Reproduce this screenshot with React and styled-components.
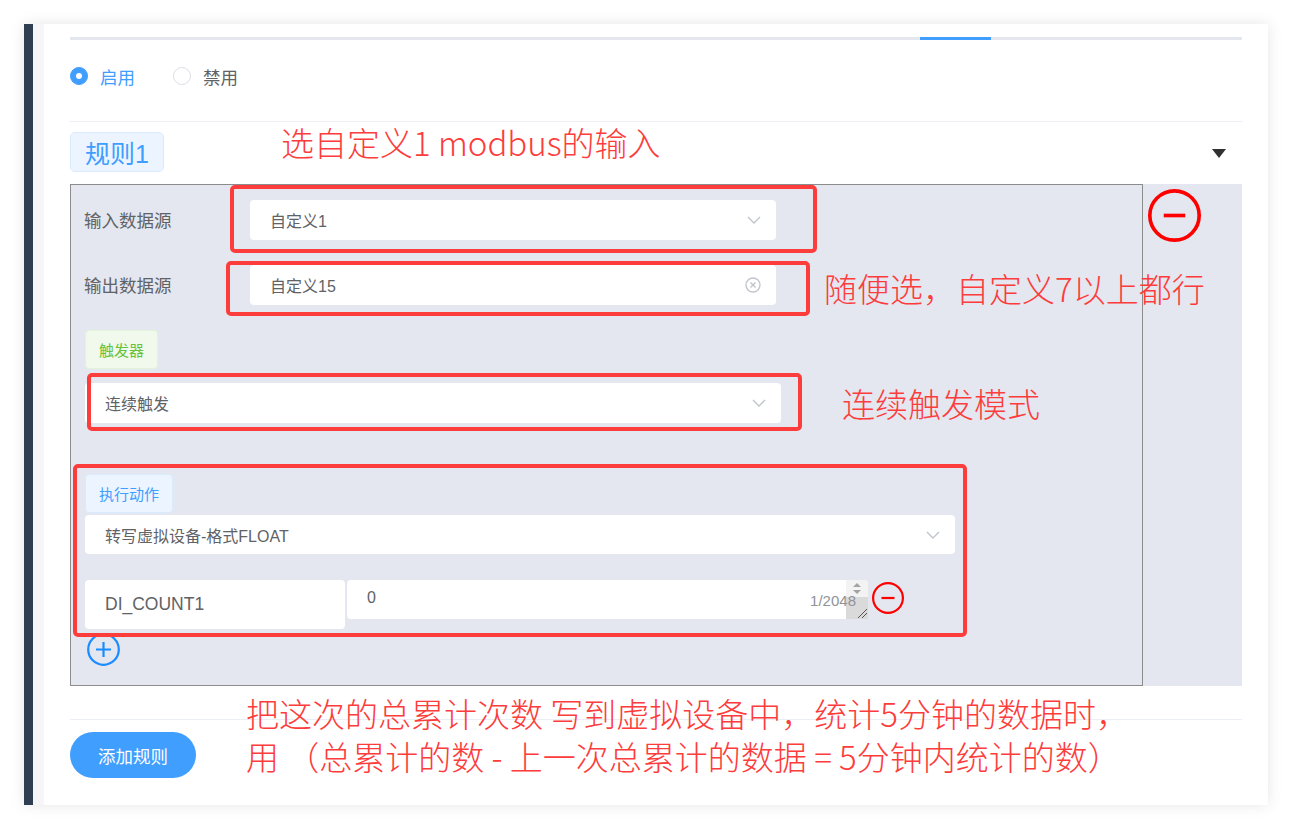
import React from 'react';
import styled, {createGlobalStyle} from 'styled-components';

const GlobalStyle = createGlobalStyle`
  body {
    margin: 0;
    background: #fff;
    font-family: "Liberation Sans", "Noto Sans CJK SC", sans-serif;
  }
`;

const Page = styled.div`
  position: relative;
  width: 1294px;
  height: 829px;
  padding: 24px 26px 24px 24px;
  box-sizing: border-box;
  background: #fff;
`;

const Card = styled.div`
  display: flex;
  width: 1244px;
  height: 781px;
  background: #fff;
  box-shadow: 0 0 14px rgba(0, 0, 0, 0.1);
`;

const SideBar = styled.div`
  width: 9px;
  background: #2f3e53;
`;

const Gutter = styled.div`
  width: 11px;
  background: #f6f6f8;
`;

const Content = styled.div`
  flex: 1;
  padding: 13px 26px 0 26px;
  display: flex;
  flex-direction: column;
`;

const TabLine = styled.div`
  height: 3px;
  background: #e4e7ed;
  display: flex;
`;

const TabActive = styled.div`
  margin-left: 850px;
  width: 71px;
  background: #409eff;
`;

const RadioRow = styled.div`
  display: flex;
  align-items: center;
  height: 20px;
  margin-top: 26px;
  margin-bottom: 35px;
`;

const Radio = styled.label`
  display: flex;
  align-items: center;
  gap: 12px;
  margin-right: 38px;
  font-size: 17.5px;
  color: ${p => p.checked ? '#409eff' : '#606266'};
`;

const RadioDot = styled.span`
  width: 18px;
  height: 18px;
  box-sizing: border-box;
  border-radius: 50%;
  border: 1px solid ${p => p.checked ? '#409eff' : '#dcdfe6'};
  background: ${p => p.checked ? '#409eff' : '#fff'};
  display: flex;
  align-items: center;
  justify-content: center;
  &::after {
    content: '';
    width: 6px;
    height: 6px;
    border-radius: 50%;
    background: #fff;
    display: ${p => p.checked ? 'block' : 'none'};
  }
`;

const Divider = styled.div`
  height: 1px;
  background: #ebeef5;
`;

const RuleHeader = styled.div`
  height: 62px;
  display: flex;
  justify-content: space-between;
  align-items: flex-start;
`;

const Tag = styled.span`
  display: inline-flex;
  align-items: center;
  box-sizing: border-box;
  height: ${p => p.big ? 40 : 39}px;
  padding: 0 ${p => p.big ? 14 : 13}px;
  font-size: ${p => p.big ? 25 : 15}px;
  border-radius: ${p => p.big ? 5 : 4}px;
  border: 1px solid ${p => p.green ? '#e1f3d8' : '#d9ecff'};
  background: ${p => p.green ? '#f0f9eb' : '#ecf5ff'};
  color: ${p => p.green ? '#67c23a' : '#409eff'};
  margin-top: ${p => p.big ? 10 : 0}px;
  align-self: flex-start;
`;

const Caret = styled.span`
  margin-top: 27px;
  margin-right: 16px;
  width: 0;
  height: 0;
  border-left: 7.5px solid transparent;
  border-right: 7.5px solid transparent;
  border-top: 9px solid #303133;
`;

const RuleBody = styled.div`
  display: flex;
  height: 502px;
  background: #e4e7ef;
`;

const RuleBox = styled.div`
  width: 1073px;
  box-sizing: border-box;
  border: 1px solid #8c8c8c;
  padding: 15px 13px 0 14px;
  display: flex;
  flex-direction: column;
`;

const SideCol = styled.div`
  flex: 1;
  padding: 5px 0 0 5px;
`;

const FormRow = styled.div`
  display: flex;
  align-items: center;
  height: 40px;
  margin-bottom: 25px;
`;

const Label = styled.span`
  width: 166px;
  margin-left: -1px;
  margin-top: -2px;
  font-size: 17.5px;
  color: #606266;
`;

const Select = styled.div`
  width: ${p => p.w}px;
  height: ${p => p.h || 40}px;
  margin-top: ${p => p.mt || 0}px;
  box-sizing: border-box;
  background: #fff;
  border-radius: 4px;
  padding: 0 15px 0 20px;
  display: flex;
  align-items: center;
  justify-content: space-between;
  font-size: 16px;
  color: #606266;
`;

const ActionTag = styled(Tag)`
  margin-top: 51px;
`;

const ParamRow = styled.div`
  display: flex;
  align-items: flex-start;
  margin-top: 26px;
`;

const KeyInput = styled.div`
  width: 260px;
  height: 49px;
  box-sizing: border-box;
  background: #fff;
  border-radius: 4px;
  padding-left: 20px;
  display: flex;
  align-items: center;
  font-size: 17.5px;
  color: #606266;
`;

const TextArea = styled.div`
  position: relative;
  margin-left: 2px;
  width: 521px;
  height: 39px;
  box-sizing: border-box;
  background: #fff;
  border-radius: 4px;
  padding: 9px 0 0 20px;
  font-size: 16px;
  color: #606266;
`;

const Counter = styled.span`
  position: absolute;
  right: 12px;
  top: 12px;
  z-index: 1;
  font-size: 15px;
  color: #909399;
`;

const ScrollCol = styled.div`
  position: absolute;
  right: 0;
  top: 0;
  bottom: 0;
  width: 22px;
  display: flex;
  flex-direction: column;
  align-items: center;
  padding-top: 2px;
  box-sizing: border-box;
  background: #f3f3f3;
  border-radius: 0 4px 4px 0;
`;

const Grip = styled.div`
  margin-top: auto;
  width: 22px;
  height: 22px;
  background: #dadada;
  display: flex;
  align-items: flex-end;
  justify-content: flex-end;
`;

const IconWrap = styled.div`
  margin-left: ${p => p.ml || 0}px;
  margin-top: ${p => p.mt || 0}px;
  display: flex;
`;

const Footer = styled.div`
  margin-top: 33px;
`;

const AddButton = styled.button`
  margin-top: 12px;
  width: 126px;
  height: 46px;
  border: none;
  border-radius: 23px;
  background: #409eff;
  color: #fff;
  font-size: 17.5px;
  font-family: inherit;
`;

const Mark = styled.div`
  position: absolute;
  left: ${p => p.x}px;
  top: ${p => p.y}px;
  width: ${p => p.w}px;
  height: ${p => p.h}px;
  box-sizing: border-box;
  border: 4px solid #fd3c3c;
  border-radius: 5px;
  pointer-events: none;
`;

const Note = styled.div`
  position: absolute;
  left: ${p => p.x}px;
  top: ${p => p.y}px;
  font-family: "Noto Sans CJK SC", sans-serif;
  font-weight: 300;
  font-size: ${p => p.size || 33}px;
  line-height: ${p => p.lh || 33}px;
  color: #fd3c3c;
  white-space: pre;
`;

const Chevron = () => (
  <svg width="14" height="8" viewBox="0 0 14 8">
    <polyline points="1,1 7,7 13,1" fill="none" stroke="#c0c4cc" strokeWidth="1.4" />
  </svg>
);

const ClearIcon = () => (
  <svg width="16" height="16" viewBox="0 0 16 16">
    <circle cx="8" cy="8" r="7" fill="none" stroke="#c0c4cc" strokeWidth="1.3" />
    <path d="M5.5 5.5 L10.5 10.5 M10.5 5.5 L5.5 10.5" stroke="#c0c4cc" strokeWidth="1.4" />
  </svg>
);

const MinusCircle = ({size, stroke}) => (
  <svg width={size} height={size} viewBox="0 0 32 32">
    <circle cx="16" cy="16" r={16 - stroke / 2} fill="none" stroke="#ff0000" strokeWidth={stroke} />
    <line x1="9.5" y1="16" x2="22.5" y2="16" stroke="#ff0000" strokeWidth={stroke} />
  </svg>
);

const PlusCircle = () => (
  <svg width="33" height="33" viewBox="0 0 33 33">
    <circle cx="16.5" cy="16.5" r="15.3" fill="none" stroke="#1a8cff" strokeWidth="2.2" />
    <path d="M16.5 9 V24 M9 16.5 H24" stroke="#1a8cff" strokeWidth="2.2" />
  </svg>
);

export default function App() {
  return (
    <Page>
      <GlobalStyle />
      <Card>
        <SideBar />
        <Gutter />
        <Content>
          <TabLine><TabActive /></TabLine>
          <RadioRow>
            <Radio checked><RadioDot checked />启用</Radio>
            <Radio><RadioDot />禁用</Radio>
          </RadioRow>
          <Divider />
          <RuleHeader>
            <Tag big>规则1</Tag>
            <Caret />
          </RuleHeader>
          <RuleBody>
            <RuleBox>
              <FormRow>
                <Label>输入数据源</Label>
                <Select w={526}>自定义1<Chevron /></Select>
              </FormRow>
              <FormRow>
                <Label>输出数据源</Label>
                <Select w={526}>自定义15<ClearIcon /></Select>
              </FormRow>
              <Tag green>触发器</Tag>
              <Select w={696} mt={14}>连续触发<Chevron /></Select>
              <ActionTag>执行动作</ActionTag>
              <Select w={870} h={39} mt={2}>转写虚拟设备-格式FLOAT<Chevron /></Select>
              <ParamRow>
                <KeyInput>DI_COUNT1</KeyInput>
                <TextArea>
                  0
                  <ScrollCol>
                    <svg width="10" height="14" viewBox="0 0 10 14">
                      <path d="M5 1 L9 5 H1 Z M1 8 H9 L5 12 Z" fill="#a3a3a3" />
                    </svg>
                    <Grip>
                      <svg width="12" height="12" viewBox="0 0 12 12">
                        <path d="M2 11 L11 2 M6 11 L11 6" stroke="#555" strokeWidth="1" />
                      </svg>
                    </Grip>
                  </ScrollCol>
                  <Counter>1/2048</Counter>
                </TextArea>
                <IconWrap ml={4} mt={2}><MinusCircle size={32} stroke={2.2} /></IconWrap>
              </ParamRow>
              <IconWrap ml={2} mt={4}><PlusCircle /></IconWrap>
            </RuleBox>
            <SideCol>
              <MinusCircle size={53} stroke={2.2} />
            </SideCol>
          </RuleBody>
          <Footer>
            <Divider />
            <AddButton>添加规则</AddButton>
          </Footer>
        </Content>
      </Card>

      <Mark x={230} y={185} w={587} h={68} />
      <Mark x={226} y={261} w={584} h={55} />
      <Mark x={87} y={373} w={715} h={58} />
      <Mark x={73} y={464} w={894} h={173} />

      <Note x={281} y={126}>选自定义1 modbus的输入</Note>
      <Note x={824} y={272}>随便选，自定义7以上都行</Note>
      <Note x={842} y={387}>连续触发模式</Note>
      <Note x={246} y={692} lh={43}>{'把这次的总累计次数 写到虚拟设备中，统计5分钟的数据时，\n用 （总累计的数 - 上一次总累计的数据 = 5分钟内统计的数）'}</Note>
    </Page>
  );
}
